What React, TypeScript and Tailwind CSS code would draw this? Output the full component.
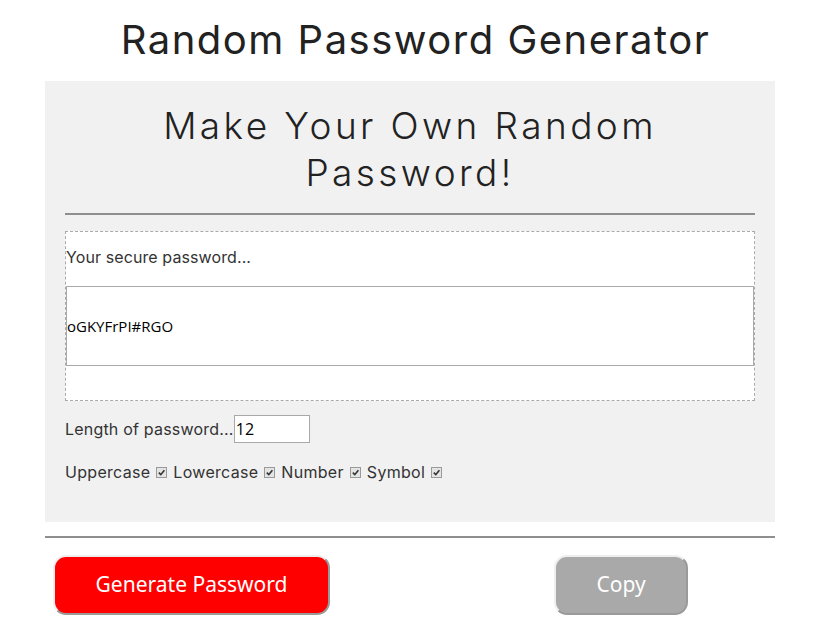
import React from "react";

function Check({ label }: { label: string }) {
  return (
    <span className="inline-flex items-center">
      <span>{label}</span>
      <span className="ml-[6px] mr-[6px] inline-flex h-[11px] w-[11px] items-center justify-center border border-[#9a9a9a] bg-[#e4e4e4]">
        <svg viewBox="0 0 10 10" className="h-[9px] w-[9px]">
          <path d="M2 5.2 L4.2 7.4 L8.2 2.4" fill="none" stroke="#333" strokeWidth="1.8" />
        </svg>
      </span>
    </span>
  );
}

export default function App() {
  const sans = { fontFamily: "Inter, 'Noto Sans', sans-serif" };
  return (
    <div className="min-h-[623px] w-[831px] bg-white text-[#222]" style={sans}>
      <h1 className="pt-[15px] text-center text-[40px] font-normal leading-[50px] tracking-[1.5px] text-[#222]">
        Random Password Generator
      </h1>
      <div className="ml-[45px] mt-[16px] w-[730px] bg-[#f1f1f1] px-[20px] pt-[21px] pb-[38px]">
        <h2 className="text-center text-[37px] font-light leading-[47px] tracking-[3.4px] text-[#222]">
          Make Your Own Random
          <br />
          Password!
        </h2>
        <div className="mt-[17px] h-[2px] bg-[#8f8f8f]" />
        <div className="mt-[16px] h-[170px] border border-dashed border-[#aaaaaa] bg-white">
          <div className="pt-[13px] text-[16px] leading-[24px] tracking-[0.1px] text-[#333]">Your secure password...</div>
          <div
            className="mt-[17px] flex h-[80px] items-center border border-[#a9a9a9] bg-white text-[15px] text-black"
            style={{ fontFamily: "'Open Sans', 'Noto Sans', sans-serif" }}
          >
            oGKYFrPI#RGO
          </div>
        </div>
        <div className="mt-[14px] flex items-center text-[16px] tracking-[0.2px] text-[#333]">
          <span>Length of password...</span>
          <input
            defaultValue="12"
            className="h-[28px] w-[76px] border border-[#a9a9a9] bg-white px-[1px] text-[16px] text-black outline-none"
            style={{ fontFamily: "'Open Sans', 'Noto Sans', sans-serif" }}
          />
        </div>
        <div className="mt-[17px] flex items-center text-[16px] leading-[24px] tracking-[0.3px] text-[#333]">
          <Check label="Uppercase" />
          <Check label="Lowercase" />
          <Check label="Number" />
          <Check label="Symbol" />
        </div>
      </div>
      <div className="ml-[45px] mt-[14px] h-[2px] w-[730px] bg-[#8f8f8f]" />
      <div className="ml-[53px] mt-[17px] flex items-center">
        <button
          className="h-[60px] w-[277px] rounded-[13px] border-2 border-t-[#eeeeee] border-l-[#eeeeee] border-r-[#9a9a9a] border-b-[#9a9a9a] bg-[#ff0000] text-[21px] text-white"
          style={{ fontFamily: "'Noto Sans', sans-serif" }}
        >
          Generate Password
        </button>
        <button
          className="ml-[224px] h-[60px] w-[134px] rounded-[13px] border-2 border-t-[#eeeeee] border-l-[#eeeeee] border-r-[#9a9a9a] border-b-[#9a9a9a] bg-[#a9a9a9] text-[21px] text-white"
          style={{ fontFamily: "'Noto Sans', sans-serif" }}
        >
          Copy
        </button>
      </div>
    </div>
  );
}
